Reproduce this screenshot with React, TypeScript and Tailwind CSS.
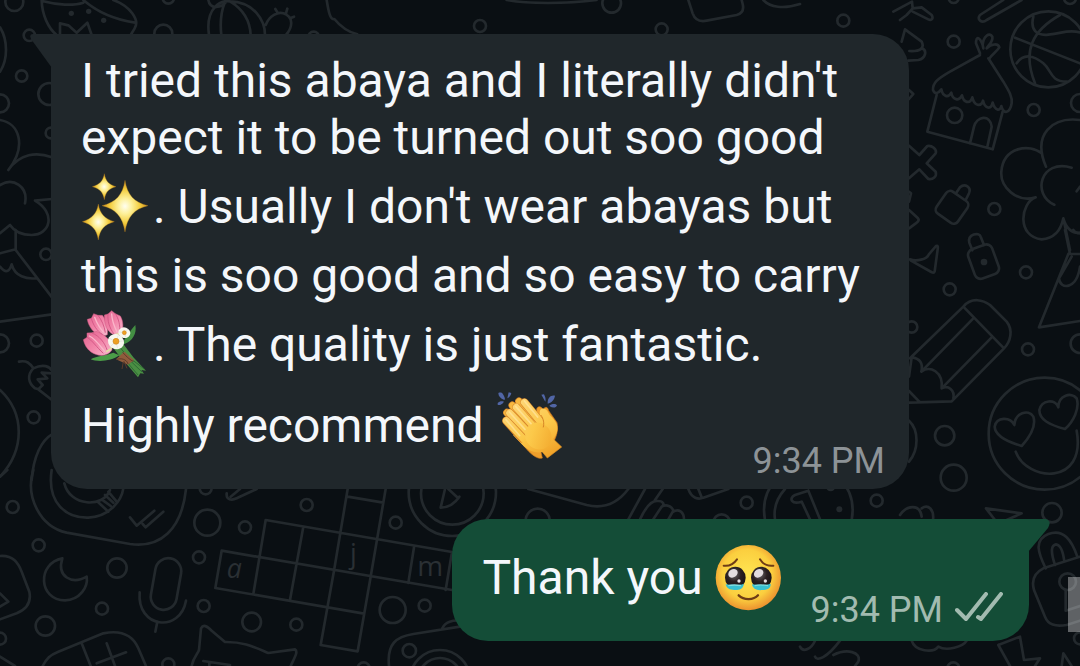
import type { ReactNode } from "react";

type EmojiProps = {
  label: string;
  viewBox: string;
  children: ReactNode;
};

type Circle = [number, number, number];

function Emoji({ label, viewBox, children }: EmojiProps) {
  return (
    <svg
      role="img"
      aria-label={label}
      viewBox={viewBox}
      className="inline-block h-[81px] w-[72px] align-[-24px]"
    >
      {children}
    </svg>
  );
}

function Sparkles() {
  return (
    <Emoji label="sparkles" viewBox="33 3 216 243">
      <defs>
        <radialGradient id="spark">
          <stop offset="0" stopColor="#fffef0" />
          <stop offset="0.3" stopColor="#fdf09a" />
          <stop offset="0.65" stopColor="#f3cd3e" />
          <stop offset="1" stopColor="#c98a20" />
        </radialGradient>
      </defs>
      <g fill="url(#spark)" stroke="#a8751c" strokeWidth="1">
        <path d="M165 46C172 90 192 112 234 122C192 132 172 155 165 201C158 155 138 132 96 122C138 112 158 90 165 46Z" />
        <path d="M103 26C107 48 116 58 138 65C116 71 107 80 103 104C99 80 89 71 67 65C89 58 99 48 103 26Z" />
        <path d="M85 117C90 146 103 161 133 170C103 179 90 192 85 225C80 192 66 179 37 170C66 161 80 146 85 117Z" />
      </g>
    </Emoji>
  );
}

function Bouquet() {
  return (
    <Emoji label="bouquet" viewBox="33 12 216 243">
      <defs>
        <linearGradient id="tulip" x1="0" y1="0" x2="1" y2="1">
          <stop offset="0" stopColor="#e0648f" />
          <stop offset="0.5" stopColor="#f283a8" />
          <stop offset="1" stopColor="#f6bccd" />
        </linearGradient>
      </defs>
      <path
        d="M62 178C82 166 105 168 130 158L148 166C125 184 82 187 62 178Z"
        fill="#4b9c48"
      />
      <path
        d="M196 75C201 101 188 123 163 132L157 140C161 116 174 101 196 75Z"
        fill="#438f43"
      />
      <path
        d="M128 142L148 168L168 190L204 232L211 220L222 221L214 210L228 212L190 172L157 128Z"
        fill="#4a8f43"
      />
      <path
        d="M153 165L204 225M163 165L216 216M174 170L223 207M149 141L174 171"
        stroke="#2f6a36"
        strokeWidth="3"
      />
      <path d="M163 155L192 180L174 194L138 178Z" fill="#8f5c3c" />
      <path
        d="M158 157C172 173 181 180 190 184M140 178C162 172 172 184 174 192M160 185L156 207M162 184L171 205"
        fill="none"
        stroke="#5d3a2a"
        strokeWidth="3"
      />
      <g fill="url(#tulip)" stroke="#cf5a85" strokeWidth="1.5">
        <path d="M52 58L64 55L71 41L84 46L97 46C108 60 115 82 112 104C98 112 76 103 65 88C57 77 53 67 52 58Z" />
        <path d="M103 45L114 42L125 32L136 41L151 48C160 62 162 88 152 102C136 112 116 98 109 82C105 71 102 58 103 45Z" />
        <path d="M40 119L51 112L51 99L66 98L80 94L94 101C112 110 127 128 126 150C112 171 84 170 63 156C49 145 43 132 40 119Z" />
      </g>
      <g fill="none" stroke="#d65a88" strokeWidth="3">
        <path d="M51 112C66 120 80 142 100 160M66 99C88 108 104 127 112 152" />
        <path d="M114 42C112 62 118 84 132 102M136 41C146 56 151 76 149 98" />
        <path d="M64 55C69 74 80 92 98 104M84 46C95 60 103 78 106 98" />
      </g>
      <g stroke="#fbb6ca" strokeWidth="4" fill="none" strokeLinecap="round">
        <path d="M58 108C76 116 89 136 104 154M125 42C126 62 134 82 141 96M74 52C80 68 89 84 100 96" />
      </g>
      <path
        d="M110 154C116 152 122 148 125 142M138 103C145 104 150 101 153 97"
        stroke="#dfe3a0"
        strokeWidth="5"
        fill="none"
        strokeLinecap="round"
      />
      <g fill="#f7f7ee">
        <ellipse cx="138" cy="125" rx="25" ry="22" transform="rotate(30 138 125)" />
        <ellipse cx="163" cy="98" rx="18" ry="16" transform="rotate(20 163 98)" />
      </g>
      <g stroke="#d3d8d3" strokeWidth="1.5">
        <path d="M137 125L117 114M137 125L122 139M137 125L143 145M137 125L158 123M137 125L145 106M163 98L148 96M163 98L174 88M163 98L167 111" />
      </g>
      <g fill="#eda021" stroke="#c67914" strokeWidth="1.5">
        <circle cx="138" cy="124" r="9" />
        <circle cx="163" cy="98" r="6" />
      </g>
    </Emoji>
  );
}

function ClappingHands() {
  return (
    <Emoji label="clapping hands" viewBox="33 15 216 243">
      <defs>
        <linearGradient
          id="hand"
          gradientUnits="userSpaceOnUse"
          x1="80"
          y1="60"
          x2="190"
          y2="235"
        >
          <stop offset="0" stopColor="#fed77c" />
          <stop offset="0.55" stopColor="#fcc94a" />
          <stop offset="1" stopColor="#f0a127" />
        </linearGradient>
      </defs>
      <g fill="#5166a6">
        <path d="M40 39C49 35 55 39 60 57L58 60C46 56 40 48 40 39Z" />
        <path d="M71 37L79 39C77 47 72 53 67 55Z" />
        <path d="M38 69C44 63 50 63 57 65C50 74 43 77 38 74Z" />
        <path d="M188 67C188 53 198 44 210 47C208 60 199 68 188 71Z" />
        <path d="M169 44L177 43C181 51 183 58 181 65Z" />
        <path d="M194 76C204 70 212 71 216 76C213 85 203 84 194 79Z" />
      </g>
      <g fill="#ef9f2b" stroke="#d07c1f" strokeWidth="2">
        <path d="M155 91C154 78 169 76 174 89C182 78 188 81 191 92L216 128C223 157 208 188 187 213L150 180Z" />
        <path d="M96 174L130 213C145 228 160 238 172 234L165 205Z" />
      </g>
      <g stroke="#d8872a" strokeWidth="23" strokeLinecap="round">
        <path d="M102 64L150 120M82 76L130 130M66 98L120 150" />
      </g>
      <g stroke="#f7b840" strokeWidth="19" strokeLinecap="round">
        <path d="M102 64L150 120M82 76L130 130M66 98L120 150" />
      </g>
      <path
        d="M112 155L166 108C161 93 167 82 177 86C190 89 188 101 200 111C220 131 221 149 212 166L205 177L230 201L187 234L172 216C150 222 124 210 104 186L84 165Z"
        fill="url(#hand)"
      />
      <g strokeLinecap="round" stroke="#d8872a" strokeWidth="25">
        <path d="M118 67L160 118M94 82L145 140M74 99L128 158M64 122L112 176" />
      </g>
      <g strokeLinecap="round" stroke="url(#hand)" strokeWidth="21">
        <path d="M118 67L172 132M94 82L155 150M74 99L140 168M64 122L126 188" />
      </g>
      <ellipse
        cx="160"
        cy="168"
        rx="38"
        ry="42"
        fill="url(#hand)"
        transform="rotate(-40 160 168)"
      />
      <path
        d="M168 106C176 117 178 130 175 141"
        fill="none"
        stroke="#d58224"
        strokeWidth="3"
        strokeLinecap="round"
      />
      <g
        fill="none"
        stroke="#ffe5a0"
        strokeWidth="5"
        strokeLinecap="round"
        opacity="0.7"
      >
        <path d="M118 63L158 111M92 79L138 131M73 96L120 148M63 119L104 167" />
      </g>
      <path
        d="M172 216L187 234L230 201L206 178"
        fill="none"
        stroke="#e0901f"
        strokeWidth="2"
      />
    </Emoji>
  );
}

function TearyFace() {
  return (
    <Emoji label="face holding back tears" viewBox="30 6 216 243">
      <defs>
        <radialGradient id="face" cx="0.48" cy="0.45" r="0.58">
          <stop offset="0" stopColor="#ffe552" />
          <stop offset="0.65" stopColor="#fbcf3f" />
          <stop offset="1" stopColor="#e9872c" />
        </radialGradient>
        <radialGradient id="eye" cx="0.43" cy="0.35" r="0.7">
          <stop offset="0" stopColor="#6a6568" />
          <stop offset="0.48" stopColor="#2a2022" />
          <stop offset="1" stopColor="#140e12" />
        </radialGradient>
      </defs>
      <circle cx="130" cy="128" r="98" fill="url(#face)" />
      <ellipse cx="91" cy="128" rx="31" ry="33" fill="url(#eye)" />
      <ellipse cx="169" cy="128" rx="31" ry="33" fill="url(#eye)" />
      <path
        d="M62 148C75 150 103 152 116 146C116 161 104 165 91 165C76 166 64 160 62 148Z"
        fill="#38bfd0"
      />
      <path
        d="M141 148C155 150 183 152 197 146C198 160 187 165 172 165C156 167 143 162 141 148Z"
        fill="#38bfd0"
      />
      <path
        d="M70 152C82 149 98 150 108 152M149 152C160 149 179 150 189 152"
        fill="none"
        stroke="#7fdde0"
        strokeWidth="4"
      />
      <g fill="#e2dcdf">
        <ellipse cx="84" cy="115" rx="15" ry="12" transform="rotate(-35 84 115)" />
        <ellipse cx="161" cy="115" rx="15" ry="12" transform="rotate(-35 161 115)" />
        <circle cx="102" cy="138" r="5" />
        <circle cx="181" cy="138" r="5" />
      </g>
      <g fill="none" stroke="#6f3c16" strokeLinecap="round" strokeWidth="6">
        <path d="M56 92C72 94 87 86 96 73" />
        <path d="M165 73C173 86 188 94 205 92" />
        <path d="M101 181C116 196 146 196 159 181" strokeWidth="7" />
      </g>
    </Emoji>
  );
}

function Circles({ items }: { items: Circle[] }) {
  return (
    <>
      {items.map(([cx, cy, r]) => (
        <circle key={`${cx}-${cy}-${r}`} cx={cx} cy={cy} r={r} />
      ))}
    </>
  );
}

// Line drawings are laid out in tiles of a third of a pixel per unit
function Wallpaper() {
  return (
    <svg
      aria-hidden="true"
      viewBox="0 0 1080 666"
      preserveAspectRatio="xMinYMin slice"
      className="absolute inset-0 h-full w-full"
      fill="none"
      stroke="#23292d"
      strokeWidth="8"
      strokeLinecap="round"
      strokeLinejoin="round"
    >
      <g transform="scale(0.33333)">
        <Circles
          items={[
            [43, 6, 27],
            [88, 106, 17],
            [65, 228, 17],
            [0, 310, 27],
            [148, 282, 33],
            [153, 399, 16],
            [138, 763, 17],
            [0, 1030, 27],
            [110, 1022, 18],
            [101, 1252, 18],
            [490, 101, 27],
            [505, -6, 17],
            [941, 112, 17],
            [1440, 78, 18],
            [1835, 10, 28],
            [1985, 88, 18],
            [2530, 62, 18],
          ]}
        />
        <path d="M0 82C24 120 24 180 0 215" />
        <path d="M125 0C126 45 145 85 170 105M130 4C170 15 220 18 250 8M250 0C290 35 340 58 405 68M340 0C390 18 420 60 404 85L392 105M180 105V70L205 76L230 98L262 68L275 105" />
        <path d="M627 105C615 20 665 0 690 4C760 5 795 60 795 105M664 105C660 70 665 30 675 6M690 4C725 25 750 60 752 105M625 0C630 30 665 25 680 4M797 75C808 45 835 35 850 40C880 50 880 80 858 105M826 27L832 37M862 26L858 40M882 50L870 55" />
        <path d="M980 0C985 30 990 62 1003 57C1020 78 1045 96 1072 103" />
        <path d="M1520 0C1580 12 1700 12 1790 0M2065 0L2078 40C2085 60 2100 66 2120 62L2210 45C2228 40 2232 28 2228 12L2225 0M2290 0C2310 22 2350 28 2400 12" />
        <path d="M0 360C60 370 80 440 25 510C60 460 110 455 156 472M0 555C40 530 85 560 75 610M156 597L105 602C170 640 150 705 95 705C60 705 40 690 30 675L0 700M47 690V750L156 892M0 760L47 748M0 800C20 825 30 810 35 793C45 830 80 838 108 835M0 965L156 943" />
        <path d="M57 1085C80 1080 90 1090 100 1105C130 1090 150 1100 156 1112M100 1105C80 1125 85 1150 105 1165L115 1168L156 1200M156 1120L125 1118L142 1135L113 1138L128 1155L115 1168" />
        <path d="M0 1170C75 1240 75 1350 0 1430M95 1440C100 1370 125 1320 156 1303" />
        <g fill="#23292d" stroke="none">
          <circle cx="214" cy="40" r="8" />
          <circle cx="266" cy="34" r="8" />
          <circle cx="311" cy="61" r="8" />
        </g>
      </g>

      <g transform="translate(900 0) scale(0.33333)">
        <Circles
          items={[
            [161, 125, 18],
            [401, 330, 18],
            [283, 627, 18],
            [164, 346, 23],
            [540, 309, 27],
            [510, -6, 18],
            [161, -6, 15],
            [445, 148, 114],
          ]}
        />
        <path d="M-20 35L36 5L38 25L20 45L0 60M38 25L65 22L95 45C102 58 92 62 85 58L38 35M5 125L15 88L65 125C75 145 60 155 28 153M65 145C82 150 78 175 55 180L25 182" />
        <path d="M310 0L240 45C230 58 245 72 260 60L365 0" />
        <path d="M400 50C390 90 410 108 445 104C490 100 500 88 540 97M480 45C400 90 365 150 405 250M345 113L540 190M350 190C370 160 400 165 430 190C455 210 450 245 500 245" />
        <path d="M240 165L150 215C110 238 98 250 99 270C105 285 115 280 124 268C128 290 145 295 154 278C158 300 178 305 186 286C190 308 210 314 217 292C222 318 243 322 249 302C255 327 273 330 278 308C285 332 300 335 304 318C310 345 330 340 335 310C338 290 325 270 310 245L265 175" />
        <path d="M240 160L228 130C228 105 240 112 248 135C250 110 268 95 277 110C280 125 265 135 260 145C275 130 295 130 298 142C290 155 278 160 268 176M248 135L250 145" />
        <path d="M110 285L82 395L278 448L308 335M210 430L222 380C230 350 270 340 275 380L262 440" />
        <path d="M27 437L58 465L82 438C95 435 112 448 107 460L80 490L107 515C112 530 98 540 85 537L58 508L27 535M27 270L40 282L27 297M27 575L33 580L27 605M27 630L54 655C60 662 54 665 27 685" />
        <rect x="117" y="582" width="78" height="80" rx="15" transform="rotate(35 156 622)" />
        <path d="M168 580L180 562C195 548 215 562 207 580L197 600" />
        <path d="M438 500C395 400 460 350 540 360M425 460C390 430 310 440 304 515C300 560 350 610 407 592C360 610 350 710 425 718C470 715 485 680 490 655C500 690 520 700 540 698M515 503C420 475 395 585 463 614M490 655L510 750M530 574L540 560" />
      </g>

      <g transform="translate(900 230) scale(0.33333)">
        <Circles
          items={[
            [378, 127, 18],
            [149, 178, 18],
            [35, 291, 17],
            [384, 358, 18],
            [540, 341, 28],
            [134, 617, 29],
            [161, 743, 39],
            [434, 611, 168],
          ]}
        />
        <circle cx="252" cy="96" r="10" fill="#23292d" stroke="none" />
        <rect x="213" y="48" width="76" height="93" rx="18" transform="rotate(-20 252 96)" />
        <path d="M217 61L208 38C202 12 238 5 242 20L252 45" />
        <path d="M30 88C50 95 80 88 86 74L108 48C114 46 114 50 113 58L104 124C102 130 98 128 94 126L33 92Z" />
        <path d="M505 72L417 292L540 273M495 0L510 72H540M515 80L477 145C480 180 530 180 540 110M520 0C525 8 533 10 540 10" />
        <path d="M30 385L190 230C215 200 250 210 270 225L320 275C340 300 332 335 312 355L155 514L27 518M190 230L312 355M220 265L64 425M275 322L125 475M35 382C60 385 70 400 64 425C90 405 130 425 125 475C145 465 165 480 160 505M35 382L27 440M27 483L60 517" />
        <path d="M365 648C320 635 285 615 284 590C290 560 330 560 343 585C345 550 385 535 400 560C410 590 390 620 365 648ZM495 597C450 585 418 570 418 540C425 510 465 505 475 532C475 495 515 485 530 505C540 535 520 575 495 597ZM347 665C380 755 560 770 530 602" />
        <path d="M27 572C57 600 57 660 27 695M0 855C20 825 60 820 65 860M65 835C85 820 103 840 99 870" />
      </g>

      <g transform="translate(0 470) scale(0.33333)">
        <Circles
          items={[
            [38, 111, 18],
            [116, 226, 18],
            [351, 294, 29],
            [622, 158, 39],
            [735, 172, 18],
            [597, 262, 18],
            [611, 408, 18],
            [306, 416, 18],
            [136, 468, 29],
            [0, 506, 18],
            [505, 583, 18],
            [617, 55, 18],
            [755, 456, 28],
          ]}
        />
        <path d="M100 0C75 80 120 170 200 188L390 222C480 235 545 180 558 57M155 0C140 100 200 145 265 143C330 140 365 90 370 55M193 40C210 110 310 115 330 60M293 95L325 125M350 95L325 65M305 88L332 108M315 75L340 98M390 142L410 167L463 122M428 162L437 172L490 125" />
        <path d="M187 265C110 280 115 390 195 391C240 390 265 350 260 320C215 345 170 320 187 265Z" />
        <rect x="459" y="264" width="78" height="156" rx="39" transform="rotate(10 498 342)" />
        <path d="M419 367C410 475 540 490 558 392M472 455L466 485" />
        <path d="M0 20L22 0M0 258C40 255 55 280 65 305L88 365C95 400 75 420 50 430L0 448M0 370L25 395L0 410M0 560L45 588" />
        <path d="M128 588C140 565 150 555 175 545L310 490C370 478 400 500 415 535L438 588M245 520L272 588M320 520L345 588M290 580L378 547" />
        <path d="M575 588C580 560 595 550 597 540L603 475C610 462 620 468 635 482L675 516C730 515 760 530 805 549L885 538C895 545 885 560 872 588M610 573L690 585M628 578V588" />
      </g>

      <g transform="translate(200 480) scale(0.33333)">
        <Circles
          items={[
            [320, 75, 18],
            [587, 128, 18],
            [289, 434, 18],
            [578, 390, 39],
            [674, 377, 18],
            [491, 565, 18],
            [628, 512, 20],
            [757, 37, 131],
            [757, 40, 94],
            [720, 600, 90],
            [720, 600, 66],
          ]}
        />
        <path d="M197 120L756 216M65 212L756 330M46 324L492 401M362 495L473 514M65 212L46 324M197 120L160 342M310 140L270 360M443 27L402 272L362 495M557 27L512 290L473 514M642 202L625 309M756 216L737 330M443 50L550 68" />
        <path d="M735 27L722 83C745 82 765 70 778 50M745 27L775 55M80 40C78 60 95 62 110 55L170 27M92 50L120 27M567 558C560 490 590 470 640 462L780 440M727 445C735 425 760 420 780 422" />
        <g
          fill="#2a3034"
          stroke="none"
          fontFamily="'Open Sans', sans-serif"
          fontSize="80"
        >
          <text x="80" y="294" fontStyle="italic">
            a
          </text>
          <text x="450" y="248">
            j
          </text>
          <text x="652" y="288" fontSize="84">
            m
          </text>
        </g>
      </g>

      <g transform="translate(440 480) scale(0.33333)">
        <Circles
          items={[
            [293, 122, 36],
            [845, 128, 25],
            [920, 68, 18],
            [1310, 62, 18],
            [1105, 90, 133],
            [1172, 20, 10],
          ]}
        />
        <circle cx="1198" cy="88" r="9" fill="#23292d" stroke="none" />
        <path d="M265 27L440 75C500 90 540 60 565 27M565 118L615 27M645 60L668 27M600 118C620 75 640 60 655 63C670 63 675 75 665 80L640 118M665 80C680 72 695 78 700 92L685 118M700 95C715 85 732 95 732 118M745 27C755 55 775 60 790 53L865 27M775 27L785 52M1035 27C1010 55 1000 85 1005 118M1105 32L1065 45C1045 55 1055 75 1085 65L1110 118M1105 32L1140 118" />
      </g>

      <g transform="translate(800 510) scale(0.33333)">
        <Circles
          items={[
            [756, 8, 29],
            [803, 215, 25],
            [840, 385, 18],
            [460, 475, 18],
          ]}
        />
        <path d="M558 -5L665 10L620 30M558 -5L585 30" />
        <path d="M737 175C715 130 700 90 745 72C790 55 815 90 832 140M765 165C750 120 755 105 768 103C785 105 790 130 793 155M840 140L730 175C700 190 695 215 702 240L735 320C745 345 765 350 800 345L840 332M797 240V302L840 288" />
        <path d="M595 405L660 380L672 450L720 445L705 468M595 405L630 468M785 468L790 430L815 468M335 392C345 425 400 430 415 410C440 425 490 410 500 392M45 440C50 455 80 445 120 392M0 410C10 430 35 415 45 392M100 435C140 415 185 425 175 455L165 468" />
      </g>
    </svg>
  );
}

function ReadTicks() {
  return (
    <svg
      role="img"
      aria-label="Delivered"
      viewBox="0 0 48 30"
      className="mb-[9px] h-[30px] w-12"
      fill="none"
      stroke="#a2bbb0"
      strokeWidth="4"
      strokeLinecap="round"
      strokeLinejoin="round"
    >
      <path d="M2 18L11 27L31 2M23 25L26 27L46 2" />
    </svg>
  );
}

export default function App() {
  return (
    <main className="relative min-h-screen overflow-hidden bg-[#0a0f13] font-['Roboto',sans-serif]">
      <Wallpaper />

      <div className="relative flex flex-col gap-[30px] px-[51px] pt-[34px] pb-6">
        <article className="relative flex max-w-[858px] flex-col self-start rounded-[36px] rounded-tl-none bg-[#20272b] pt-[18px] pr-6 pb-[7px] pl-[30px]">
          <svg
            aria-hidden="true"
            viewBox="0 0 22 34"
            className="absolute top-0 -left-[21px] h-[34px] w-[22px]"
            fill="#20272b"
          >
            <path d="M3 0H22V34L1 5Q-1 0 3 0Z" />
          </svg>
          <p className="text-[48px] leading-[57px] text-[#f4f7fb]">
            I tried this abaya and I literally didn't expect it to be turned out
            soo good <Sparkles />. Usually I don't wear abayas but this is soo
            good and so easy to carry <Bouquet />. The quality is just
            fantastic. Highly recommend <ClappingHands />
          </p>
          <time className="-mt-[26px] self-end text-[36px] leading-[42px] text-[#8d9397]">
            9:34 PM
          </time>
        </article>

        <article className="relative flex items-end gap-6 self-end rounded-[36px] rounded-tr-none bg-[#144d37] pr-[26px] pl-[30px]">
          <svg
            aria-hidden="true"
            viewBox="0 0 22 34"
            className="absolute top-0 -right-[21px] h-[34px] w-[22px]"
            fill="#144d37"
          >
            <path d="M0 0H18Q24 2 20 9L0 33Z" />
          </svg>
          <p className="pt-[18px] pb-[23px] text-[48px] leading-[57px] text-[#f4f7fb]">
            Thank you <TearyFace />
          </p>
          <div className="flex items-end gap-3 pb-[10px]">
            <time className="text-[36px] leading-[42px] text-[#a2bbb0]">
              9:34 PM
            </time>
            <ReadTicks />
          </div>
        </article>
      </div>

      <div className="absolute right-0 bottom-[34px] h-[55px] w-3 bg-[#ffffff]/35" />
    </main>
  );
}
